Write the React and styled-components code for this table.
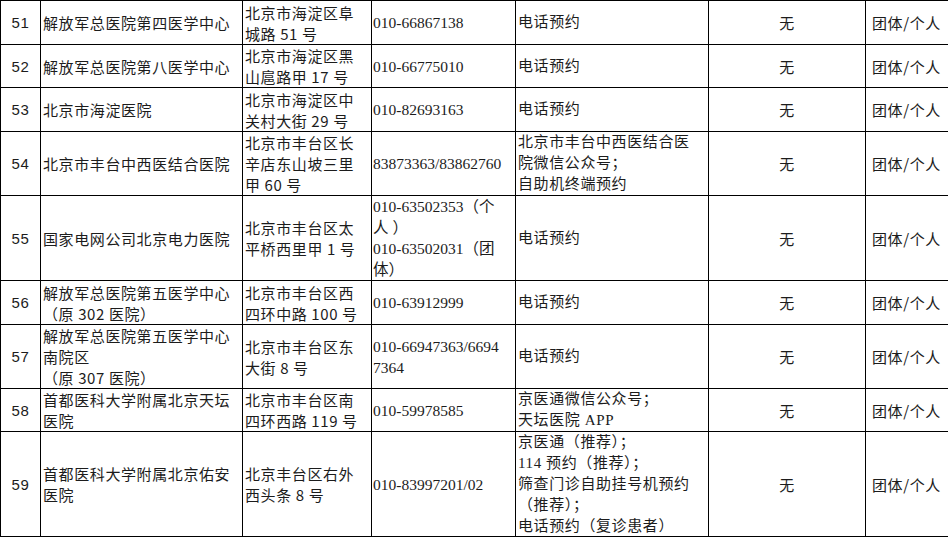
import styled, { createGlobalStyle } from "styled-components";

const rows = [
  {
    no: "51",
    h: 44,
    name: ["解放军总医院第四医学中心"],
    addr: ["北京市海淀区阜", "城路 51 号"],
    tel: ["010-66867138"],
    way: ["电话预约"],
  },
  {
    no: "52",
    h: 43,
    name: ["解放军总医院第八医学中心"],
    addr: ["北京市海淀区黑", "山扈路甲 17 号"],
    tel: ["010-66775010"],
    way: ["电话预约"],
  },
  {
    no: "53",
    h: 44,
    name: ["北京市海淀医院"],
    addr: ["北京市海淀区中", "关村大街 29 号"],
    tel: ["010-82693163"],
    way: ["电话预约"],
  },
  {
    no: "54",
    h: 64,
    name: ["北京市丰台中西医结合医院"],
    addr: ["北京市丰台区长", "辛店东山坡三里", "甲 60 号"],
    tel: ["83873363/83862760"],
    way: ["北京市丰台中西医结合医", "院微信公众号；", "自助机终端预约"],
  },
  {
    no: "55",
    h: 85,
    name: ["国家电网公司北京电力医院"],
    addr: ["北京市丰台区太", "平桥西里甲 1 号"],
    tel: ["010-63502353（个", "人 ）", "010-63502031（团", "体）"],
    way: ["电话预约"],
  },
  {
    no: "56",
    h: 44,
    name: ["解放军总医院第五医学中心", "（原 302 医院）"],
    addr: ["北京市丰台区西", "四环中路 100 号"],
    tel: ["010-63912999"],
    way: ["电话预约"],
  },
  {
    no: "57",
    h: 64,
    name: ["解放军总医院第五医学中心", "南院区", "（原 307 医院）"],
    addr: ["北京市丰台区东", "大街 8 号"],
    tel: ["010-66947363/6694", "7364"],
    way: ["电话预约"],
  },
  {
    no: "58",
    h: 43,
    name: ["首都医科大学附属北京天坛", "医院"],
    addr: ["北京市丰台区南", "四环西路 119 号"],
    tel: ["010-59978585"],
    way: ["京医通微信公众号；", "天坛医院 APP"],
  },
  {
    no: "59",
    h: 105,
    name: ["首都医科大学附属北京佑安", "医院"],
    addr: ["北京丰台区右外", "西头条 8 号"],
    tel: ["010-83997201/02"],
    way: [
      "京医通（推荐）；",
      "114 预约（推荐）；",
      "筛查门诊自助挂号机预约",
      "（推荐）；",
      "电话预约（复诊患者）",
    ],
  },
];

export default function App() {
  return (
    <>
      <GlobalStyle />
      <Table>
        {rows.map((r) => (
          <Row key={r.no} $h={r.h}>
            <Cell $align="center" $font="index">
              {r.no}
            </Cell>
            <Cell>
              <Lines lines={r.name} />
            </Cell>
            <Cell>
              <Lines lines={r.addr} />
            </Cell>
            <Cell $pad="0 1px" $font="tel">
              <Lines lines={r.tel} />
            </Cell>
            <Cell $font="serif">
              <Lines lines={r.way} />
            </Cell>
            <Cell $align="center">无</Cell>
            <Cell $pad="0 0 0 6px" $last>
              团体/个人
            </Cell>
          </Row>
        ))}
      </Table>
    </>
  );
}

function Lines({ lines }) {
  return lines.map((l, i) => <Line key={i}>{l}</Line>);
}

const GlobalStyle = createGlobalStyle`
  html, body {
    margin: 0;
    padding: 0;
    background: #ffffff;
    overflow: hidden;
  }
`;

const Table = styled.div`
  display: flex;
  flex-direction: column;
  width: 956px;
  border-top: 1px solid #000;
  border-left: 1px solid #000;
  font-family: "Noto Sans CJK SC", sans-serif;
  font-size: 15px;
  letter-spacing: 0.6px;
  line-height: 21px;
  color: #1c1c1c;
`;

const Row = styled.div`
  display: grid;
  grid-template-columns: 40px 202px 129px 144px 193px 157px 90px;
  height: ${(p) => p.$h}px;
  box-sizing: border-box;
  border-bottom: 1px solid #000;
`;

const fonts = {
  index: `font-family: "Liberation Sans", "Noto Sans CJK SC", sans-serif;`,
  serif: `font-family: "Liberation Serif", "Noto Sans CJK SC", serif;`,
  tel: `
    font-family: "Liberation Serif", "Noto Sans CJK SC", serif;
    font-size: 15.5px;
    letter-spacing: 0;
  `,
};

const Cell = styled.div`
  display: flex;
  flex-direction: column;
  justify-content: center;
  align-items: ${(p) => (p.$align === "center" ? "center" : "flex-start")};
  padding: ${(p) => p.$pad || "0 2px"};
  box-sizing: border-box;
  border-right: ${(p) => (p.$last ? "none" : "1px solid #000")};
  white-space: nowrap;
  overflow: hidden;
  ${(p) => fonts[p.$font] || ""}
`;

const Line = styled.div`
  white-space: nowrap;
`;
